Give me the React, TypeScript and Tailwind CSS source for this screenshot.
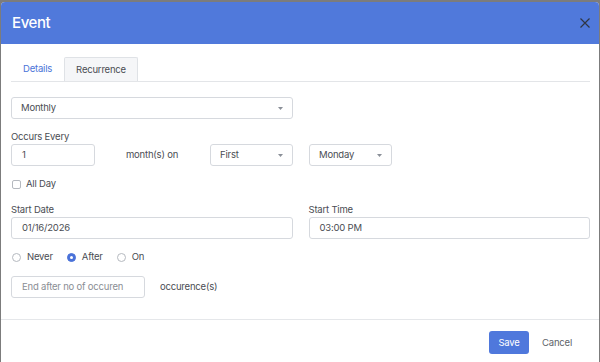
import React from "react";

const Caret = () => (
  <svg width="5" height="3" viewBox="0 0 5 3" className="shrink-0">
    <path d="M0 0 L2.5 3 L5 0 Z" fill="#8a8f98" />
  </svg>
);

function Select({ value, className }: { value: string; className: string }) {
  return (
    <div
      className={`flex h-[22px] items-center justify-between rounded-[3px] border border-[#d6d9de] bg-white pl-[9px] pr-[9px] text-[#4a4d53] ${className}`}
    >
      <span>{value}</span>
      <Caret />
    </div>
  );
}

function Input({ value, className, placeholder }: { value?: string; className: string; placeholder?: boolean }) {
  return (
    <div
      className={`flex h-[22px] items-center rounded-[3px] border border-[#d6d9de] bg-white pl-[10px] ${placeholder ? "text-[#8a8e94]" : "text-[#4a4d53]"} ${className}`}
    >
      {value}
    </div>
  );
}

function Radio({ checked, label }: { checked?: boolean; label: string }) {
  return (
    <div className="flex items-center gap-[6px]">
      <span
        className={`flex h-[9px] w-[9px] items-center justify-center rounded-full border ${checked ? "border-[#4a72d9] bg-[#4a72d9]" : "border-[#b5b9bf] bg-white"}`}
      >
        {checked && <span className="h-[3px] w-[3px] rounded-full bg-white" />}
      </span>
      <span>{label}</span>
    </div>
  );
}

export default function App() {
  return (
    <div
      className="h-[362px] w-[600px] overflow-hidden bg-[#7c7c7c] pl-[1px] pt-[2px]"
      style={{ fontFamily: "Inter, 'Noto Sans', sans-serif" }}
    >
      <div className="flex h-[362px] w-[598px] flex-col overflow-hidden rounded-t-[4px] bg-white text-[9.5px] leading-[14px] tracking-[-0.2px] text-[#4a4d53]">
        {/* Header */}
        <div className="flex h-[42px] shrink-0 items-center justify-between bg-[#5079db] pl-[11px] pr-[9px]">
          <span className="text-[15px] font-medium leading-[20px] tracking-[-0.4px] text-white">Event</span>
          <svg width="10" height="10" viewBox="0 0 10 10">
            <path d="M0.5 0.5 L9.5 9.5 M9.5 0.5 L0.5 9.5" stroke="#2f3644" strokeWidth="1.2" />
          </svg>
        </div>

        {/* Body */}
        <div className="flex flex-col pl-[10px] pr-[9px] pt-[13px]">
          {/* Tabs */}
          <div className="flex h-[25px] items-end border-b border-[#e3e5e8]">
            <div className="flex h-[24px] items-center pl-[12px] pr-[12px] text-[#4a74d8]">Details</div>
            <div className="flex h-[24px] items-center rounded-t-[2px] border border-b-0 border-[#dfe2e6] bg-[#f5f6f8] pl-[11px] pr-[11px] text-[#4a4d53]">
              Recurrence
            </div>
          </div>

          <Select value="Monthly" className="mt-[15px] w-[282px]" />

          <div className="mt-[11px]">Occurs Every</div>
          <div className="flex items-center">
            <Input value="1" className="w-[84px]" />
            <span className="ml-[31px] w-[84px]">month(s) on</span>
            <Select value="First" className="w-[83px]" />
            <Select value="Monday" className="ml-[16px] w-[83px]" />
          </div>

          <div className="mt-[11px] flex items-center gap-[5px]">
            <span className="ml-[1px] h-[9px] w-[9px] rounded-[2px] border border-[#b5b9bf] bg-white" />
            <span>All Day</span>
          </div>

          <div className="mt-[12px] flex gap-[16px]">
            <div className="flex w-[282px] flex-col">
              <span>Start Date</span>
              <Input value="01/16/2026" className="w-full" />
            </div>
            <div className="flex w-[282px] flex-col">
              <span>Start Time</span>
              <Input value="03:00 PM" className="w-full" />
            </div>
          </div>

          <div className="mt-[11px] flex items-center gap-[14px] pl-[1px]">
            <Radio label="Never" />
            <Radio checked label="After" />
            <Radio label="On" />
          </div>

          <div className="mt-[12px] flex items-center">
            <Input value="End after no of occuren" placeholder className="w-[134px]" />
            <span className="ml-[15px]">occurence(s)</span>
          </div>
        </div>

        {/* Footer */}
        <div className="mt-[21px] flex h-[45px] items-start justify-end border-t border-[#e5e7ea] pr-[27px] pt-[11px]">
          <div className="flex h-[23px] w-[40px] items-center justify-center rounded-[3px] bg-[#4f78dc] text-white">Save</div>
          <div className="ml-[13px] flex h-[23px] items-center text-[#60646a]">Cancel</div>
        </div>
      </div>
    </div>
  );
}
